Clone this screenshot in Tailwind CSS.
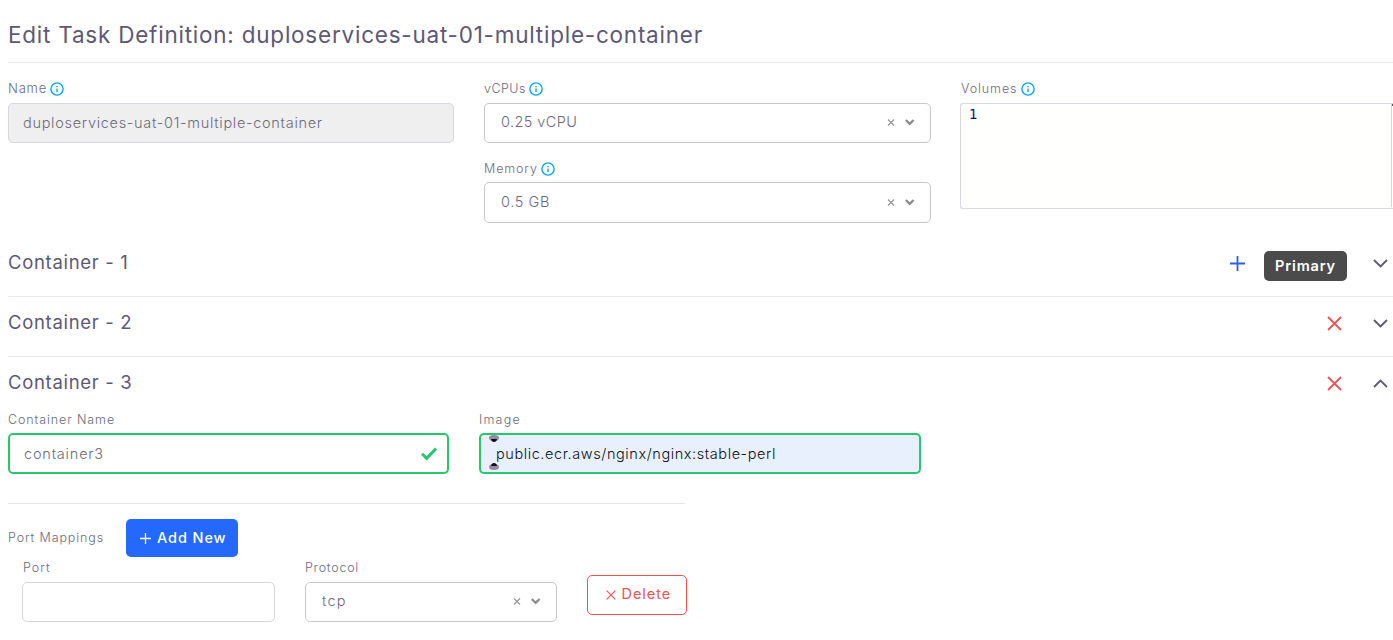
<!DOCTYPE html>
<html lang="en"><head><meta charset="utf-8"><title>Edit Task Definition</title>
<script src="https://cdn.jsdelivr.net/npm/@tailwindcss/browser@4"></script></head>
<body class="h-[640px] w-[1393px] overflow-hidden bg-white font-['Inter',sans-serif] text-[#6e6b7b]">
<svg class="hidden">
  <symbol id="info" viewBox="0 0 24 24" fill="none" stroke="currentColor" stroke-width="2.3"><circle cx="12" cy="12" r="10.5"/><path d="M12 17v-6M12 7v2.2"/></symbol>
  <symbol id="down" viewBox="0 0 15 15" fill="none" stroke="currentColor"><path stroke-width="1.8" d="M1 4 7.5 10.5 14 4"/></symbol>
  <symbol id="cross" viewBox="0 0 15 15" fill="none" stroke="currentColor"><path stroke-width="1.8" d="M1 1 14 14M14 1 1 14"/></symbol>
  <symbol id="clear" viewBox="0 0 8 8" fill="none" stroke="currentColor"><path stroke-width="1.3" d="M1 .5 7 6.5M7 .5 1 6.5"/></symbol>
  <symbol id="caret" viewBox="0 0 10 8" fill="none" stroke="currentColor"><path stroke-width="2.2" d="M.8 1 4.7 4.9 8.6 1"/></symbol>
</svg>
<main class="pl-2">
  <header class="h-[63px] border-b border-[#ebe9f1] pt-[18px]">
    <h1 class="text-[22.5px] leading-[33px] tracking-[0.77px] whitespace-nowrap text-[#5e5873]">Edit Task Definition: duploservices-uat-01-multiple-container</h1>
  </header>

  <section class="flex h-[174px] gap-[30px] pt-4">
    <div class="w-[446px] shrink-0">
      <label class="flex h-5 items-center gap-[3px] text-[13px] font-light tracking-[0.8px]">Name <svg class="size-[14px] text-[#03a4f0]"><use href="#info"/></svg></label>
      <div class="mt-1 flex h-10 items-center rounded-[5px] border border-[#d8d6de] bg-[#efefef] pl-[14px] text-[14.5px] font-light tracking-[0.7px]">duploservices-uat-01-multiple-container</div>
    </div>
    <div class="w-[447px] shrink-0">
      <label class="flex h-5 items-center gap-[3.5px] text-[12.5px] font-light tracking-[0.45px]">vCPUs <svg class="size-[14px] text-[#03a4f0]"><use href="#info"/></svg></label>
      <div class="mt-1 flex h-10 items-center rounded-[5px] border border-[#c8c8c8] pr-[15px] pl-4 text-[14.5px] font-light tracking-[0.4px]"><span class="-mt-0.5 grow">0.25 vCPU</span><svg class="mr-[10px] size-2 text-[#999]"><use href="#clear"/></svg><svg class="h-2 w-[10px] text-[#8c8c8c]"><use href="#caret"/></svg></div>
      <label class="mt-4 flex h-5 items-center gap-[3.5px] text-[12.5px] font-light tracking-[0.88px]">Memory <svg class="size-[14px] text-[#03a4f0]"><use href="#info"/></svg></label>
      <div class="mt-[3px] flex h-[41px] items-center rounded-[5px] border border-[#c8c8c8] pr-[15px] pl-4 text-[14.5px] font-light tracking-[0.6px]"><span class="-mt-0.5 grow">0.5 GB</span><svg class="mr-[10px] size-2 text-[#999]"><use href="#clear"/></svg><svg class="h-2 w-[10px] text-[#8c8c8c]"><use href="#caret"/></svg></div>
    </div>
    <div class="w-[433px] shrink-0 -ml-px">
      <label class="flex h-5 items-center gap-1 pl-px text-[12.5px] font-light tracking-[0.9px]">Volumes <svg class="size-[14px] text-[#03a4f0]"><use href="#info"/></svg></label>
      <div class="mt-1 flex h-[106px] w-[434px] rounded-l-[3px] border border-r-0 border-[#d8d6de] bg-[#fffffe]">
        <div class="h-[103px] w-[431px] border-r border-[#d8d6de] pt-px pl-2 font-['DejaVu_Sans',sans-serif] text-[13.5px] leading-[18px] text-[#0b1560]">1</div>
        <div class="h-0.5 w-px bg-[#555]"></div>
      </div>
    </div>
  </section>

  <section class="flex h-[60px] border-b border-[#ebe9f1] pr-[5px]">
    <h2 class="h-[50px] grow text-[18.5px] leading-[50px] tracking-[0.68px] text-[#5e5873]">Container - 1</h2>
    <svg class="mt-[19px] size-[15px] text-[#2b5cf0]" viewBox="0 0 15 15" fill="none" stroke="currentColor" stroke-width="1.8"><path d="M7.5 0v15M0 7.5h15"/></svg>
    <div class="mt-[14px] ml-[19px] flex h-[30px] w-[83px] items-center justify-center rounded-[5px] bg-[#4b4b4b] text-[14.5px] font-semibold tracking-[0.86px] text-white">Primary</div>
    <svg class="mt-[19px] ml-[26px] size-[15px] text-[#5e5873]"><use href="#down"/></svg>
  </section>
  <section class="flex h-[60px] border-b border-[#ebe9f1] pr-[5px]">
    <h2 class="h-[50px] grow text-[18.5px] leading-[50px] tracking-[0.68px] text-[#5e5873]">Container - 2</h2>
    <svg class="mt-[19px] size-[15px] text-[#ea5455]"><use href="#cross"/></svg>
    <svg class="mt-[19px] ml-[31px] size-[15px] text-[#5e5873]"><use href="#down"/></svg>
  </section>
  <section>
    <div class="flex h-[52px] pr-[5px]">
      <h2 class="grow text-[18.5px] leading-[50px] tracking-[0.68px] text-[#5e5873]">Container - 3</h2>
      <svg class="mt-[19px] size-[15px] text-[#ea5455]"><use href="#cross"/></svg>
      <svg class="mt-[19px] ml-[31px] size-[15px] rotate-180 text-[#5e5873]"><use href="#down"/></svg>
    </div>
    <div class="flex gap-[30px]">
      <div class="w-[441px]">
        <label class="block h-6 text-[12.5px] leading-[21px] font-light tracking-[0.89px]">Container Name</label>
        <div class="flex h-[41px] items-center justify-between rounded-[5px] border-2 border-[#28c76f] pr-[10px] pl-[14px] text-[14.5px] font-light tracking-[0.8px]">container3
          <svg class="h-[14px] w-4" viewBox="0 0 16 14" fill="none" stroke="#28c76f" stroke-width="3"><path d="M1 6.7 5.7 11.3 15 1.6"/></svg></div>
      </div>
      <div class="w-[442px]">
        <label class="block h-6 text-[12.5px] leading-[21px] font-light tracking-[1.2px]">Image</label>
        <div class="relative flex h-[41px] items-center rounded-[5px] border-2 border-[#28c76f] bg-[#e8f0fe] pl-[15px] text-[14.5px] font-light tracking-[0.58px] text-[#101018]">public.ecr.aws/nginx/nginx:stable-perl
          <!-- clipped password-manager markers at the field's inner edge -->
          <svg class="absolute top-0 left-2 h-[37px] w-[10px]" viewBox="0 0 10 37"><ellipse cx="5" cy="3" rx="5" ry="2.9" fill="#918ca3"/><path d="M2 4h6Q7.5 7 5 7T2 4" fill="#150820"/><ellipse cx="5" cy="32" rx="5" ry="2.9" fill="#918ca3"/><path d="M2 31h6Q7.5 28 5 28T2 31" fill="#150820"/></svg>
        </div>
      </div>
    </div>
    <div class="mt-[29px] w-[677px] border-t border-[#e6e6e8]"></div>
    <div class="mt-[15px] flex h-[38px] items-center">
      <span class="w-[118px] text-[12.5px] font-light tracking-[0.88px]">Port Mappings</span>
      <button class="flex h-[38px] w-28 items-center rounded-[5px] bg-[#2469fb] pl-[14px] text-[14.5px] font-medium tracking-[0.9px] whitespace-nowrap text-white"><svg class="mt-px mr-[6px] size-[11px] shrink-0" viewBox="0 0 11 11" fill="none" stroke="currentColor" stroke-width="1.3"><path d="M5.5 0v11M0 5.5h11"/></svg>Add New</button>
    </div>
    <div class="flex gap-[30px] pl-[14px]">
      <div class="w-[253px]">
        <label class="block h-[25px] pl-px text-[12.5px] leading-[21px] font-light tracking-[1px]">Port</label>
        <div class="h-10 rounded-[5px] border border-[#d8d6de]"></div>
      </div>
      <div class="w-[252px]">
        <label class="block h-[25px] text-[12.5px] leading-[21px] font-light tracking-[0.76px]">Protocol</label>
        <div class="flex h-10 items-center rounded-[5px] border border-[#c8c8c8] pr-[15px] pl-4 text-[14.5px] font-light tracking-[1.2px]"><span class="-mt-0.5 grow">tcp</span><svg class="mr-[10px] size-2 text-[#999]"><use href="#clear"/></svg><svg class="h-2 w-[10px] text-[#8c8c8c]"><use href="#caret"/></svg></div>
      </div>
      <button class="mt-[18px] flex h-10 w-[100px] items-center rounded-[5px] border border-[#ea5455] pb-0.5 pl-[17.5px] text-[14.5px] tracking-[0.95px] text-[#ea5455]"><svg class="mt-px mr-[6px] size-[10px] shrink-0"><use href="#cross"/></svg>Delete</button>
    </div>
  </section>
</main>
</body></html>
